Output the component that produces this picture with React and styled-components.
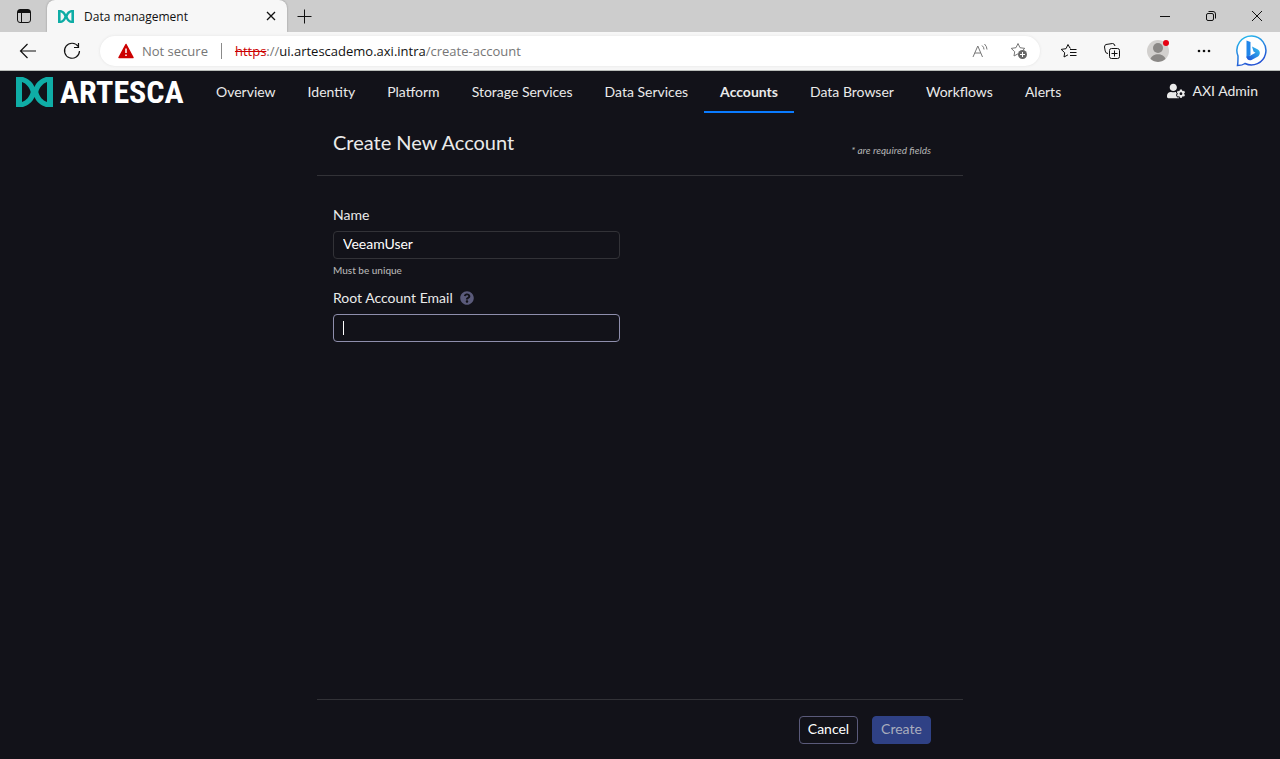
import React, { useState } from "react";
import styled, { createGlobalStyle } from "styled-components";
import { FaUserCog, FaQuestionCircle } from "react-icons/fa";

const Global = createGlobalStyle`
  *, *::before, *::after { box-sizing: border-box; }
  body { margin: 0; background: #121219; }
  button, input { font: inherit; }
`;

const Window = styled.div`
  display: flex;
  flex-direction: column;
  min-height: 100vh;
  font-family: "Open Sans", "Noto Sans", sans-serif;
`;

const TitleBar = styled.div`
  display: flex;
  height: 32px;
  background: #cdcdcd;
`;

const ChromeButton = styled.button`
  display: flex;
  align-items: center;
  justify-content: center;
  flex: none;
  width: ${(p) => p.$w || 44}px;
  padding: 0;
  border: 0;
  background: none;
  color: #111;
`;

const BrowserTab = styled.div`
  display: flex;
  align-items: center;
  width: 240px;
  padding-left: 11px;
  border-radius: 8px 8px 0 0;
  background: #f7f7f7;
  font-size: 12px;
  box-shadow: 0 0 2px #888;
  clip-path: inset(0 -3px 0 -3px);
`;

const TabTitle = styled.span`
  flex: 1;
  margin-left: 10px;
  color: #111;
`;

const WindowControls = styled.div`
  display: flex;
  margin-left: auto;
`;

const ToolBar = styled.div`
  display: flex;
  align-items: center;
  height: 39px;
  padding: 0 2px 0 6px;
  border-bottom: 1px solid #b9bcb9;
  background: #f7f7f7;
`;

const AddressBar = styled.div`
  display: flex;
  align-items: center;
  flex: 1;
  height: 30px;
  margin: 0 6px;
  padding: 0 0 0 18px;
  border-radius: 15px;
  background: #fff;
  box-shadow: 0 0 3px #e2e2e2;
  font-size: 13px;
  color: #767676;
`;

const Security = styled.span`
  display: flex;
  align-items: center;
  gap: 8px;
  height: 16px;
  margin-right: 13px;
  padding-right: 13px;
  border-right: 1px solid #8a8a8a;
`;

const Url = styled.span`
  flex: 1;
  s { color: #c00; }
  b { color: #111; font-weight: 400; }
`;

const Product = styled.div`
  display: flex;
  flex: 1;
  flex-direction: column;
  background: #121219;
  color: #eaeaea;
  font-family: Lato, sans-serif;
  font-size: 14px;
  line-height: 20px;
`;

const NavBar = styled.header`
  display: flex;
  height: 42px;
  padding: 0 22px 0 16px;
`;

const Brand = styled.a`
  display: flex;
  align-items: center;
  width: 184px;
  color: #fff;
  text-decoration: none;
`;

const Wordmark = styled.span`
  margin-left: 7px;
  font-family: "Liberation Sans Narrow", "Roboto Condensed", sans-serif;
  font-size: 32px;
  font-weight: 700;
`;

const Nav = styled.nav`
  display: flex;
`;

const NavLink = styled.a`
  padding: 11px 16px 0;
  border-bottom: 2px solid ${(p) => (p.$active ? "#0a7bff" : "transparent")};
  color: #eaeaea;
  font-weight: ${(p) => (p.$active ? 700 : 400)};
  text-decoration: none;
  white-space: nowrap;
`;

const UserButton = styled.button`
  display: flex;
  align-items: center;
  gap: 8px;
  margin-left: auto;
  padding: 0 0 2px;
  border: 0;
  background: none;
  color: #eaeaea;
`;

const Form = styled.form`
  display: flex;
  flex: 1;
  flex-direction: column;
  width: 100%;
  max-width: 646px;
  margin: 0 auto;
`;

const FormHeader = styled.div`
  display: flex;
  justify-content: space-between;
  height: 63px;
  padding: 17px 32px 0 16px;
  border-bottom: 1px solid #323237;
`;

const Title = styled.h1`
  margin: 0;
  font-size: 20px;
  font-weight: 400;
  line-height: 24px;
`;

const RequiredNote = styled.em`
  padding-top: 10px;
  color: #b5b5b5;
  font-size: 10px;
  line-height: 20px;
`;

const Fields = styled.div`
  flex: 1;
  padding: 29px 16px;
`;

const Label = styled.label`
  display: flex;
  align-items: center;
  gap: 7px;
  height: 20px;
  margin-bottom: 6px;
`;

const InputBox = styled.div`
  position: relative;
  width: 287px;
`;

const TextInput = styled.input`
  display: block;
  width: 100%;
  height: 28px;
  padding: 0 9px 4px;
  border: 1px solid #323237;
  border-radius: 4px;
  outline: 0;
  background: #121219;
  color: #fff;
  &:focus { border-color: #8e8eac; }
  &:focus:placeholder-shown { caret-color: transparent; }
  &:focus:placeholder-shown + span { display: block; }
`;

const Caret = styled.span`
  display: none;
  position: absolute;
  top: 7px;
  left: 10px;
  width: 1px;
  height: 14px;
  background: #fff;
  pointer-events: none;
`;

const Hint = styled.div`
  margin: 1px 0 8px;
  color: #b5b5b5;
  font-size: 10px;
  font-weight: 500;
`;

const FormFooter = styled.div`
  display: flex;
  justify-content: flex-end;
  gap: 14px;
  height: 60px;
  padding: 16px 32px 0 16px;
  border-top: 1px solid #323237;
`;

const ActionButton = styled.button`
  width: 59px;
  height: 28px;
  padding: 0 0 2px;
  border: 1px solid ${(p) => (p.$primary ? "#2f4185" : "#5a5a7a")};
  border-radius: 4px;
  background: ${(p) => (p.$primary ? "#2f4185" : "#121219")};
  color: ${(p) => (p.$primary ? "#a9adbd" : "#fff")};
`;

const Line = ({ size = 16, children, ...rest }) => (
  <svg width={size} height={size} viewBox={`0 0 ${size} ${size}`} fill="none" stroke="currentColor" aria-hidden="true" {...rest}>
    {children}
  </svg>
);

const Butterfly = ({ width, height }) => (
  <svg width={width} height={height} viewBox="0 0 37 30" aria-hidden="true">
    <path fill="#0fada6" fillRule="evenodd" d="M0 0H7C12 1.500 16.500 5 18.500 10C20.500 5 25 1.500 30 0H37V30H30C25 28.500 20.500 25 18.500 20C16.500 25 12 28.500 7 30H0ZM6 5V25C10.500 23.500 13.500 19.500 14.700 15C13.500 10.500 10.500 6.500 6 5ZM31 5C26.500 6.500 23.500 10.500 22.300 15C23.500 19.500 26.500 23.500 31 25Z" />
  </svg>
);

const Bing = () => (
  <svg width="32" height="34" viewBox="0 0 32 34" aria-hidden="true">
    <defs>
      <linearGradient id="ring" x1="0" y1="0" x2=".4" y2="1">
        <stop stopColor="#28c3ef" /><stop offset="1" stopColor="#2453d4" />
      </linearGradient>
      <linearGradient id="bee" x1="0" y1="1" x2="1" y2="0">
        <stop stopColor="#1b50d8" /><stop offset="1" stopColor="#36c5f0" />
      </linearGradient>
    </defs>
    <path d="M16 2A14.500 14.500 0 1 1 9 29.500C7 31 4 31.500 1.500 31.500C2 29 2 26 2 22A14.500 14.500 0 0 1 16 2Z" fill="#fff" stroke="url(#ring)" strokeWidth="1.500" />
    <path d="M10.500 6.500L14.500 8V21L10.500 24Z" fill="#2187ea" />
    <path d="M16 12.500L21.500 15.200C24.500 17 24.500 20.500 22 22.500L15.500 26C13 27 10.500 25.500 10.500 22.500L14.500 21.500L19.500 18.800L17.500 17.500Z" fill="url(#bee)" />
  </svg>
);

const starPath = "M8 1.500L10 5.700L14.800 6.400L11.300 9.700M4 14L8 11.800M4 14L4.700 9.700L1.200 6.400L6 5.700L8 1.500";

const links = ["Overview", "Identity", "Platform", "Storage Services", "Data Services", "Accounts", "Data Browser", "Workflows", "Alerts"];

export default function App() {
  const [name, setName] = useState("VeeamUser");
  const [email, setEmail] = useState("");
  return (
    <Window>
      <Global />
      <TitleBar>
        <ChromeButton $w={47} aria-label="Tab actions">
          <Line><rect x="1.500" y="1.500" width="13" height="13" rx="2.500" /><path d="M2 3.500H14" strokeWidth="3" /><path d="M5.500 5V14" /></Line>
        </ChromeButton>
        <BrowserTab>
          <Butterfly width={16} height={13} />
          <TabTitle>Data management</TabTitle>
          <ChromeButton $w={32} aria-label="Close tab">
            <Line size={10}><path d="M1 1L9 9M9 1L1 9" strokeWidth="1.300" /></Line>
          </ChromeButton>
        </BrowserTab>
        <ChromeButton $w={34} aria-label="New tab">
          <Line><path d="M8.500 1.500V15.500M1.500 8.500H15.500" /></Line>
        </ChromeButton>
        <WindowControls>
          <ChromeButton $w={46} aria-label="Minimize"><Line size={10}><path d="M0 5.500H10" /></Line></ChromeButton>
          <ChromeButton $w={46} aria-label="Restore"><Line size={12}><rect x="1.500" y="3.500" width="7" height="7" rx="1.500" /><path d="M3.500 1.500H8A2.500 2.500 0 0 1 10.500 4V8.500" /></Line></ChromeButton>
          <ChromeButton $w={46} aria-label="Close"><Line size={12}><path d="M1 1L11 11M11 1L1 11" /></Line></ChromeButton>
        </WindowControls>
      </TitleBar>
      <ToolBar>
        <ChromeButton aria-label="Back"><Line size={18}><path d="M17 9H1.500M8.500 2L1.500 9L8.500 16" strokeWidth="1.200" /></Line></ChromeButton>
        <ChromeButton aria-label="Refresh"><Line size={18}><path d="M15.200 4.500A7.500 7.500 0 1 0 16.500 9M15.500 1V5.500H11" strokeWidth="1.200" /></Line></ChromeButton>
        <AddressBar>
          <Security>
            <svg width="16" height="16" viewBox="0 0 16 16" aria-hidden="true"><path d="M8 1.500L15 14.500H1Z" fill="#c00" stroke="#c00" strokeWidth="1.500" strokeLinejoin="round" /><path d="M8 5.500V10M8 11.500V13" stroke="#fff" strokeWidth="1.500" /></svg>
            Not secure
          </Security>
          <Url><s>https</s>://<b>ui.artescademo.axi.intra</b>/create-account</Url>
          <ChromeButton $w={36} aria-label="Read aloud"><Line stroke="#777"><path d="M1 14L5.800 3L10.500 14M2.800 10H8.800M10 2.500Q12 4 12 6.500M12.500 1Q15 3.500 15 6.500" /></Line></ChromeButton>
          <ChromeButton $w={42} aria-label="Add to favorites"><Line size={18} stroke="#777"><path d={starPath} /><circle cx="12.500" cy="12.500" r="4.500" fill="#666" stroke="none" /><path d="M12.500 10V15M10 12.500H15" stroke="#fff" /></Line></ChromeButton>
        </AddressBar>
        <ChromeButton aria-label="Favorites"><Line size={17}><path d="M10.500 5.200L10 5.200L8 1.500L6 5.700L1.200 6.400L4.700 9.700L4 14L8 11.800" /><path d="M10 6.500H16.500M10 9.500H16.500M10 12.500H16.500" strokeWidth="1.200" /></Line></ChromeButton>
        <ChromeButton aria-label="Collections"><Line size={18}><path d="M5 11.500Q2.500 11.500 2.200 9L1.500 5Q1.500 3 3 2.500L9.500 1.500Q11.500 1.500 12 4" /><rect x="6.500" y="6.500" width="10" height="10" rx="2" /><path d="M11.500 8.500V14.500M8.500 11.500H14.500" /></Line></ChromeButton>
        <ChromeButton $w={48} aria-label="Profile">
          <svg width="24" height="24" viewBox="0 0 24 24" aria-hidden="true"><circle cx="12" cy="12" r="11" fill="#d2d0ce" /><circle cx="12" cy="9" r="5" fill="#8a8886" /><path d="M4.500 20C6 13.500 18 13.500 19.500 20A11 11 0 0 1 4.500 20Z" fill="#8a8886" /><circle cx="20" cy="4" r="3" fill="#e60012" /></svg>
        </ChromeButton>
        <ChromeButton aria-label="Settings and more"><Line><g fill="currentColor" stroke="none"><circle cx="3" cy="8" r="1.300" /><circle cx="8" cy="8" r="1.300" /><circle cx="13" cy="8" r="1.300" /></g></Line></ChromeButton>
        <ChromeButton $w={52} aria-label="Bing"><Bing /></ChromeButton>
      </ToolBar>
      <Product>
        <NavBar>
          <Brand href="#"><Butterfly width={37} height={30} /><Wordmark>ARTESCA</Wordmark></Brand>
          <Nav>
            {links.map((l) => <NavLink key={l} href="#" $active={l === "Accounts"}>{l}</NavLink>)}
          </Nav>
          <UserButton><FaUserCog size={18} />AXI Admin</UserButton>
        </NavBar>
        <Form onSubmit={(e) => e.preventDefault()}>
          <FormHeader>
            <Title>Create New Account</Title>
            <RequiredNote>* are required fields</RequiredNote>
          </FormHeader>
          <Fields>
            <Label htmlFor="name">Name</Label>
            <InputBox>
              <TextInput id="name" value={name} onChange={(e) => setName(e.target.value)} />
            </InputBox>
            <Hint>Must be unique</Hint>
            <Label htmlFor="email">Root Account Email<FaQuestionCircle size={14} color="#5a5a7a" /></Label>
            <InputBox>
              <TextInput id="email" autoFocus placeholder=" " value={email} onChange={(e) => setEmail(e.target.value)} />
              <Caret />
            </InputBox>
          </Fields>
          <FormFooter>
            <ActionButton type="button">Cancel</ActionButton>
            <ActionButton type="submit" $primary>Create</ActionButton>
          </FormFooter>
        </Form>
      </Product>
    </Window>
  );
}
